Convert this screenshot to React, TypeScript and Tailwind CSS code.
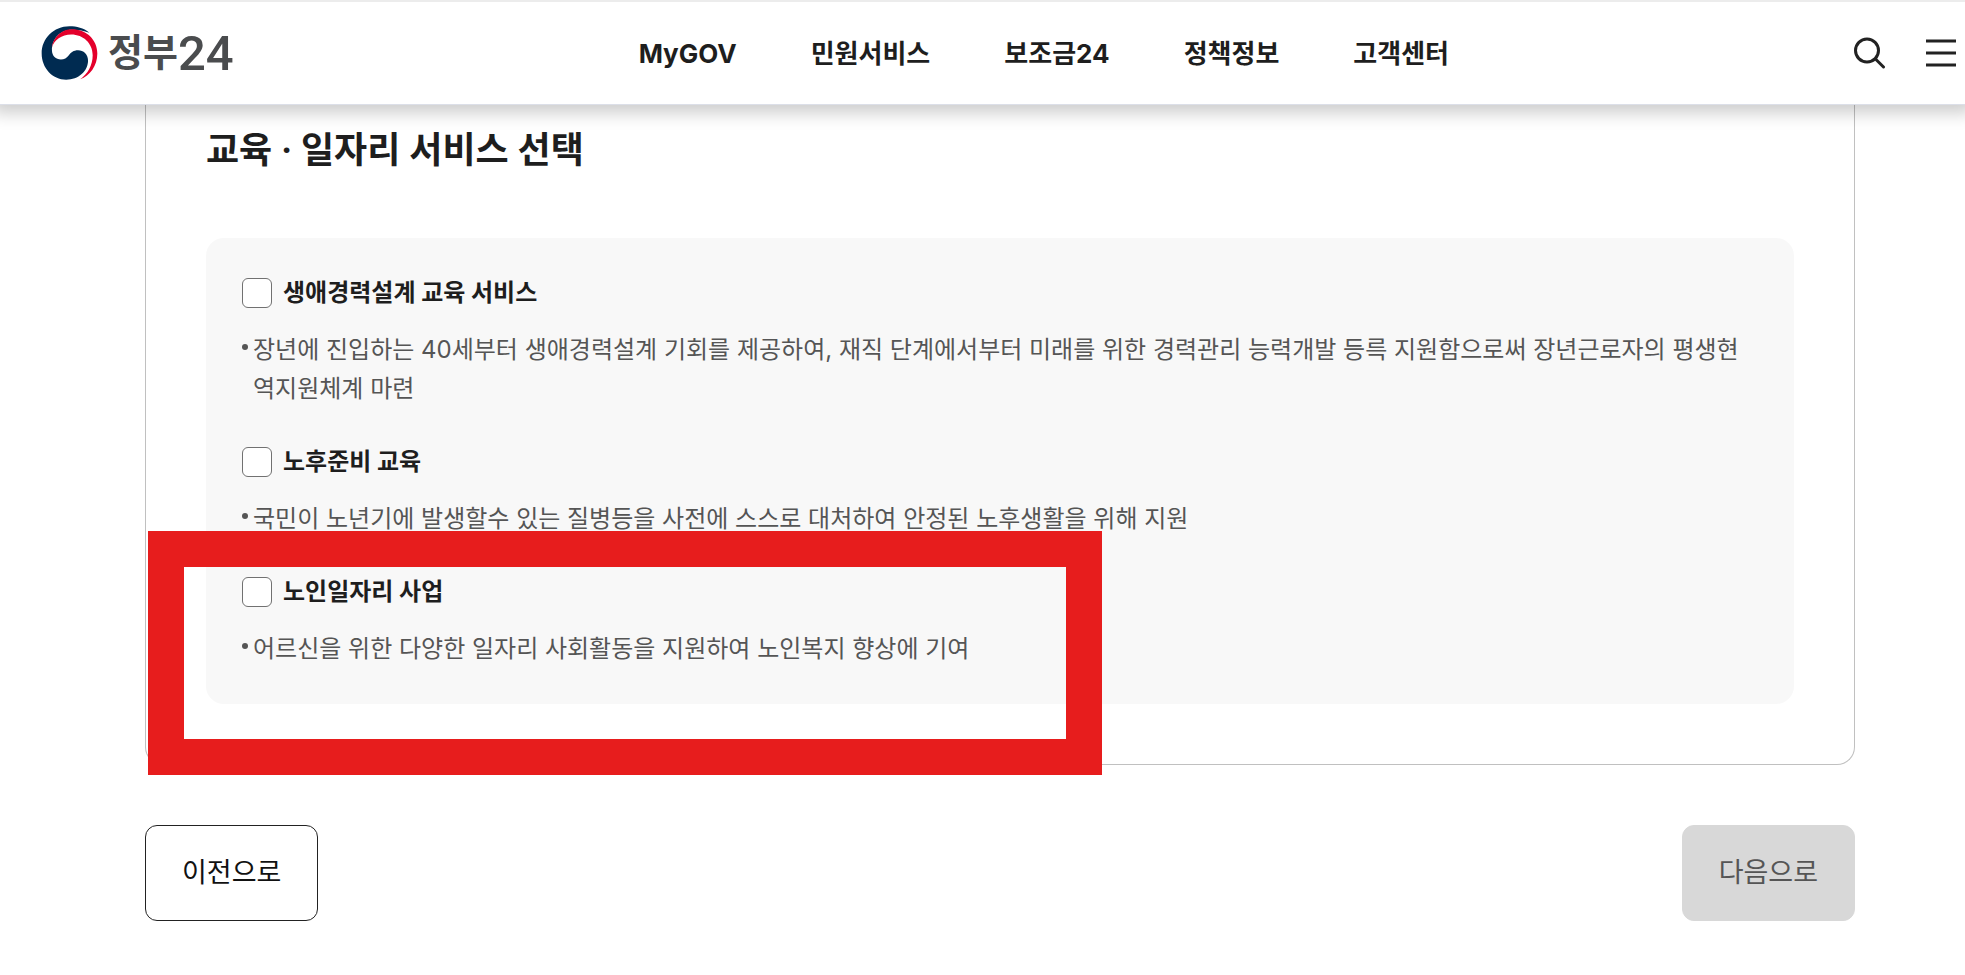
import { useState } from 'react';

const navItems = ['MyGOV', '민원서비스', '보조금24', '정책정보', '고객센터'];

const services = [
  {
    id: 'career',
    title: '생애경력설계 교육 서비스',
    description:
      '장년에 진입하는 40세부터 생애경력설계 기회를 제공하여, 재직 단계에서부터 미래를 위한 경력관리 능력개발 등륵 지원함으로써 장년근로자의 평생현역지원체계 마련',
  },
  {
    id: 'retirement',
    title: '노후준비 교육',
    description:
      '국민이 노년기에 발생할수 있는 질병등을 사전에 스스로 대처하여 안정된 노후생활을 위해 지원',
  },
  {
    id: 'senior-job',
    title: '노인일자리 사업',
    description: '어르신을 위한 다양한 일자리 사회활동을 지원하여 노인복지 향상에 기여',
  },
];

function Logo() {
  return (
    <a
      href="#"
      className="flex items-center gap-[10px] font-['Roboto','Noto_Sans_CJK_KR',sans-serif] text-[#4a4c4e]"
    >
      <svg width="57" height="54" viewBox="123 77 170 163" aria-hidden="true">
        <path
          fill="#002b51"
          d="M268 97C250 83 230 78 208 78C160 78 124 115 124 160C124 203 156 239 198 239C235 239 264 213 264 181C264 162 250 150 234 150C220 150 212 157 206 165C200 173 192 178 182 178C167 178 155 167 155 150C155 115 180 88 215 88C235 88 252 92 268 97Z"
        />
        <path
          fill="#e4002b"
          d="M155 143C158 110 185 87 215 87C258 87 292 118 292 160C292 197 270 227 240 238C262 222 278 196 278 165C278 130 250 103 213 103C185 103 160 120 155 143Z"
        />
      </svg>
      <span className="flex items-center">
        <span className="text-[38px] leading-none font-bold">정부</span>
        <span className="text-[49px] leading-none font-medium">24</span>
      </span>
    </a>
  );
}

function Header() {
  return (
    <header className="sticky top-0 z-10 flex h-[105px] items-center justify-between border-t-2 border-b border-t-[#ececec] border-b-[#dcdfe8] bg-white pr-[9px] pl-[41px] shadow-[0_0_16px_8px_rgba(0,0,0,0.2)]">
      <Logo />
      <nav className="flex items-center gap-[74px]">
        {navItems.map((item) => (
          <a key={item} href="#" className="text-[26px] font-bold whitespace-nowrap">
            {item}
          </a>
        ))}
      </nav>
      <div className="flex items-center gap-10">
        <button type="button" aria-label="검색">
          <svg width="32" height="32" viewBox="0 0 32 32" fill="none" stroke="#222" strokeWidth="3">
            <circle cx="13" cy="13.5" r="11.5" />
            <path d="M21.5 22L29.5 30" strokeLinecap="round" />
          </svg>
        </button>
        <button type="button" aria-label="전체메뉴">
          <svg width="30" height="32" viewBox="0 0 30 32" stroke="#222" strokeWidth="3">
            <path d="M0 4H30M0 16H30M0 28H30" />
          </svg>
        </button>
      </div>
    </header>
  );
}

export default function App() {
  const [selected, setSelected] = useState<string[]>([]);

  const toggle = (id: string) =>
    setSelected((prev) => (prev.includes(id) ? prev.filter((v) => v !== id) : [...prev, id]));

  return (
    <div
      lang="ko"
      className="min-h-screen bg-white font-['Inter','Noto_Sans_CJK_KR',sans-serif] text-[#1e1e1e]"
    >
      <Header />

      <main className="pr-[110px] pb-[54px] pl-[145px]">
        <section className="relative rounded-b-[18px] border border-t-0 border-[#c0c0c0] px-[60px] pt-[19px] pb-[60px]">
          <h1 className="font-['Roboto','Noto_Sans_CJK_KR',sans-serif] text-4xl leading-[54px] font-bold">
            교육 · 일자리 서비스 선택
          </h1>

          <ul className="mt-[60px] flex flex-col gap-[35px] rounded-[18px] bg-[#f8f8f8] p-9">
            {services.map((service) => (
              <li key={service.id}>
                <label className="flex items-center gap-[11px] text-2xl leading-[38px] font-bold">
                  <input
                    type="checkbox"
                    checked={selected.includes(service.id)}
                    onChange={() => toggle(service.id)}
                    className="size-[30px] appearance-none rounded-md border border-[#717171] bg-white checked:bg-[#256ef4]"
                  />
                  {service.title}
                </label>
                <div className="mt-[18px] flex gap-[5px] pr-2 text-2xl leading-[39px] text-[#555]">
                  <span className="mt-[14px] size-[6px] shrink-0 rounded-full bg-[#555]" />
                  <p className="break-all">{service.description}</p>
                </div>
              </li>
            ))}
          </ul>

          {/* highlight around the senior job option */}
          <div className="pointer-events-none absolute -bottom-[11px] left-[2px] h-[244px] w-[954px] border-[36px] border-[#e71d1d]" />
        </section>

        <div className="mt-[60px] flex justify-between text-[27px]">
          <button
            type="button"
            className="h-24 rounded-xl border border-[#222] bg-white px-9 text-[#111]"
          >
            이전으로
          </button>
          <button
            type="button"
            disabled
            className="h-24 rounded-xl border border-[#d8d8d8] bg-[#d8d8d8] px-9 text-[#555]"
          >
            다음으로
          </button>
        </div>
      </main>
    </div>
  );
}
